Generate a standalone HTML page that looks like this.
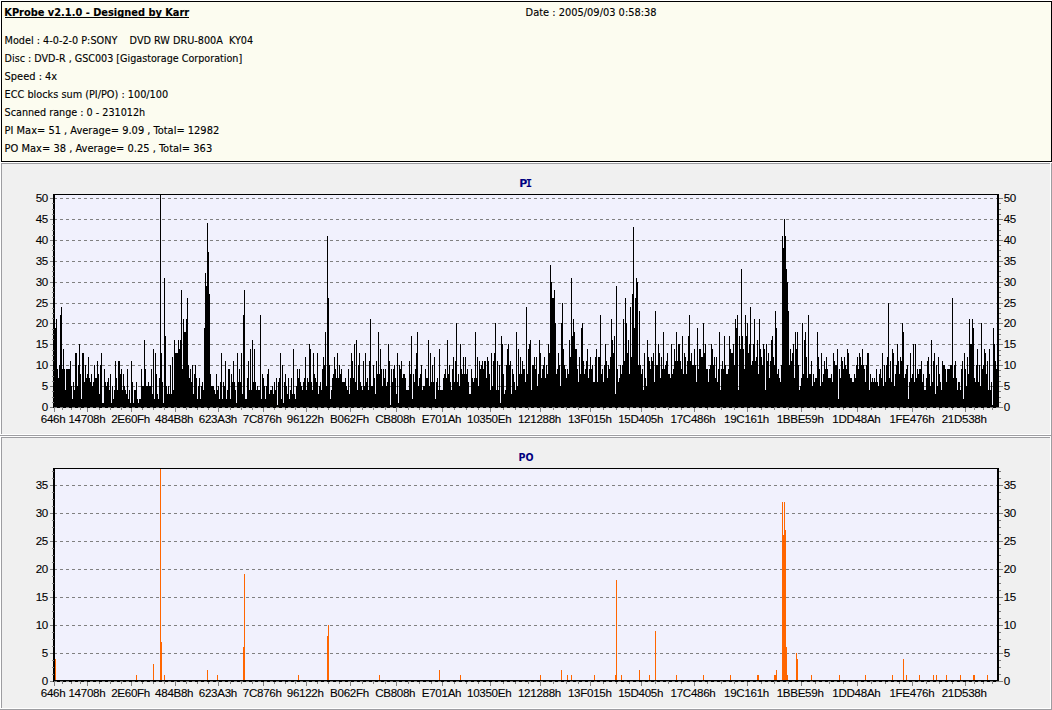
<!DOCTYPE html>
<html lang="en"><head><meta charset="utf-8"><title>KProbe v2.1.0 - PI/PO scan</title>
<style>html,body{margin:0;padding:0;background:#f0f0f0;}body{width:1052px;height:710px;overflow:hidden;}svg{display:block;}.t{font-family:"DejaVu Sans Condensed","Liberation Sans",sans-serif;font-size:11px;fill:#000;stroke:#000;stroke-width:0.12px;}.a{font-family:"Liberation Sans",sans-serif;font-size:11.6px;letter-spacing:-0.3px;fill:#000;stroke:#000;stroke-width:0.1px;}.h{font-family:"DejaVu Sans","Liberation Sans",sans-serif;font-size:11px;font-weight:bold;fill:#000080;}</style></head><body>
<svg width="1052" height="710" viewBox="0 0 1052 710">
<g shape-rendering="crispEdges">
<rect x="0" y="0" width="1052" height="710" fill="#f0f0f0"/>
<rect x="0" y="0" width="1052" height="163" fill="#fff"/>
<rect x="1" y="1" width="1051" height="161" fill="#fcfcf0"/>
<rect x="0" y="163" width="1" height="547" fill="#fff"/>
<path d="M1.5 1.5H1051.5V161.5H1.5Z" fill="none" stroke="#000" stroke-width="1"/>
<rect x="1" y="163" width="1049" height="1" fill="#9d9da1"/>
<rect x="1" y="163" width="1" height="271" fill="#9d9da1"/>
<rect x="1050" y="163" width="1" height="272" fill="#fff"/>
<rect x="1" y="434" width="1050" height="1" fill="#fff"/>
<rect x="1" y="437" width="1049" height="1" fill="#9d9da1"/>
<rect x="1" y="437" width="1" height="271" fill="#9d9da1"/>
<rect x="1050" y="437" width="1" height="272" fill="#fff"/>
<rect x="1" y="708" width="1050" height="1" fill="#fff"/>
<rect x="0" y="435" width="1052" height="1" fill="#9d9da1"/>
<rect x="0" y="436" width="1052" height="1" fill="#fff"/>
<rect x="1051" y="163" width="1" height="547" fill="#9d9da1"/>
<rect x="0" y="709" width="1052" height="1" fill="#9d9da1"/>
</g>
<g shape-rendering="crispEdges">
<rect x="54" y="194" width="944" height="213" fill="#f1f1fd"/>
<path d="M54 386.5H997" stroke="#808080" stroke-width="1" stroke-dasharray="3 3" fill="none"/>
<path d="M54 365.5H997" stroke="#808080" stroke-width="1" stroke-dasharray="3 3" fill="none"/>
<path d="M54 344.5H997" stroke="#808080" stroke-width="1" stroke-dasharray="3 3" fill="none"/>
<path d="M54 323.5H997" stroke="#808080" stroke-width="1" stroke-dasharray="3 3" fill="none"/>
<path d="M54 303.5H997" stroke="#808080" stroke-width="1" stroke-dasharray="3 3" fill="none"/>
<path d="M54 282.5H997" stroke="#808080" stroke-width="1" stroke-dasharray="3 3" fill="none"/>
<path d="M54 261.5H997" stroke="#808080" stroke-width="1" stroke-dasharray="3 3" fill="none"/>
<path d="M54 240.5H997" stroke="#808080" stroke-width="1" stroke-dasharray="3 3" fill="none"/>
<path d="M54 219.5H997" stroke="#808080" stroke-width="1" stroke-dasharray="3 3" fill="none"/>
<path d="M54 198.5H997" stroke="#808080" stroke-width="1" stroke-dasharray="3 3" fill="none"/>
<path d="M54.5 407V323M55.5 407V328M56.5 407V319M57.5 407V369M58.5 407V378M59.5 407V365M60.5 407V315M61.5 407V307M62.5 407V369M63.5 407V349M64.5 407V369M65.5 407V390M66.5 407V369M67.5 407V369M68.5 407V369M69.5 407V369M70.5 407V361M71.5 407V386M72.5 407V399M73.5 407V382M74.5 407V390M75.5 407V353M76.5 407V353M77.5 407V386M78.5 407V365M79.5 407V344M80.5 407V374M81.5 407V399M82.5 407V353M83.5 407V353M84.5 407V382M85.5 407V365M86.5 407V378M87.5 407V374M88.5 407V357M89.5 407V378M90.5 407V382M91.5 407V374M92.5 407V386M93.5 407V382M94.5 407V365M95.5 407V378M96.5 407V378M97.5 407V361M98.5 407V374M99.5 407V394M100.5 407V365M101.5 407V353M102.5 407V403M103.5 407V403M104.5 407V369M105.5 407V382M106.5 407V386M107.5 407V382M108.5 407V378M109.5 407V390M110.5 407V374M111.5 407V403M112.5 407V386M113.5 407V399M114.5 407V390M115.5 407V361M116.5 407V378M117.5 407V390M118.5 407V361M119.5 407V361M120.5 407V374M121.5 407V369M122.5 407V390M123.5 407V374M124.5 407V386M125.5 407V390M126.5 407V394M127.5 407V369M128.5 407V399M129.5 407V390M130.5 407V403M131.5 407V361M132.5 407V382M133.5 407V403M134.5 407V390M135.5 407V390M136.5 407V382M137.5 407V399M138.5 407V403M139.5 407V399M140.5 407V399M141.5 407V369M142.5 407V386M143.5 407V386M144.5 407V340M145.5 407V369M146.5 407V386M147.5 407V386M148.5 407V382M149.5 407V386M150.5 407V386M151.5 407V369M152.5 407V394M153.5 407V349M154.5 407V399M155.5 407V353M156.5 407V374M157.5 407V394M158.5 407V399M159.5 407V378M160.5 407V194M161.5 407V353M162.5 407V382M163.5 407V403M164.5 407V278M165.5 407V336M166.5 407V386M167.5 407V394M168.5 407V386M169.5 407V394M170.5 407V365M171.5 407V394M172.5 407V357M173.5 407V390M174.5 407V340M175.5 407V353M176.5 407V353M177.5 407V353M178.5 407V340M179.5 407V349M180.5 407V340M181.5 407V290M182.5 407V369M183.5 407V319M184.5 407V332M185.5 407V332M186.5 407V319M187.5 407V298M188.5 407V365M189.5 407V378M190.5 407V369M191.5 407V382M192.5 407V365M193.5 407V394M194.5 407V374M195.5 407V365M196.5 407V378M197.5 407V399M198.5 407V386M199.5 407V378M200.5 407V399M201.5 407V386M202.5 407V382M203.5 407V390M204.5 407V328M205.5 407V273M206.5 407V286M207.5 407V223M208.5 407V252M209.5 407V294M210.5 407V374M211.5 407V386M212.5 407V386M213.5 407V386M214.5 407V390M215.5 407V394M216.5 407V374M217.5 407V390M218.5 407V386M219.5 407V399M220.5 407V382M221.5 407V353M222.5 407V399M223.5 407V382M224.5 407V386M225.5 407V361M226.5 407V399M227.5 407V390M228.5 407V369M229.5 407V369M230.5 407V399M231.5 407V374M232.5 407V382M233.5 407V361M234.5 407V382M235.5 407V390M236.5 407V403M237.5 407V353M238.5 407V382M239.5 407V369M240.5 407V382M241.5 407V353M242.5 407V394M243.5 407V315M244.5 407V290M245.5 407V399M246.5 407V399M247.5 407V378M248.5 407V361M249.5 407V390M250.5 407V349M251.5 407V390M252.5 407V340M253.5 407V382M254.5 407V349M255.5 407V382M256.5 407V390M257.5 407V386M258.5 407V390M259.5 407V390M260.5 407V315M261.5 407V399M262.5 407V374M263.5 407V378M264.5 407V386M265.5 407V399M266.5 407V386M267.5 407V374M268.5 407V369M269.5 407V394M270.5 407V390M271.5 407V390M272.5 407V386M273.5 407V394M274.5 407V382M275.5 407V390M276.5 407V378M277.5 407V405M278.5 407V382M279.5 407V378M280.5 407V353M281.5 407V399M282.5 407V365M283.5 407V403M284.5 407V382M285.5 407V374M286.5 407V386M287.5 407V394M288.5 407V378M289.5 407V399M290.5 407V390M291.5 407V378M292.5 407V394M293.5 407V349M294.5 407V394M295.5 407V399M296.5 407V386M297.5 407V369M298.5 407V378M299.5 407V369M300.5 407V382M301.5 407V386M302.5 407V390M303.5 407V382M304.5 407V378M305.5 407V357M306.5 407V390M307.5 407V378M308.5 407V382M309.5 407V344M310.5 407V349M311.5 407V382M312.5 407V390M313.5 407V353M314.5 407V374M315.5 407V378M316.5 407V382M317.5 407V353M318.5 407V394M319.5 407V386M320.5 407V382M321.5 407V390M322.5 407V369M323.5 407V357M324.5 407V365M325.5 407V332M326.5 407V386M327.5 407V236M328.5 407V298M329.5 407V365M330.5 407V399M331.5 407V390M332.5 407V378M333.5 407V374M334.5 407V357M335.5 407V369M336.5 407V378M337.5 407V353M338.5 407V378M339.5 407V365M340.5 407V374M341.5 407V369M342.5 407V382M343.5 407V382M344.5 407V382M345.5 407V378M346.5 407V386M347.5 407V390M348.5 407V369M349.5 407V394M350.5 407V378M351.5 407V353M352.5 407V361M353.5 407V378M354.5 407V344M355.5 407V382M356.5 407V340M357.5 407V390M358.5 407V365M359.5 407V353M360.5 407V382M361.5 407V386M362.5 407V390M363.5 407V361M364.5 407V386M365.5 407V353M366.5 407V382M367.5 407V378M368.5 407V390M369.5 407V361M370.5 407V319M371.5 407V386M372.5 407V386M373.5 407V365M374.5 407V378M375.5 407V394M376.5 407V361M377.5 407V374M378.5 407V332M379.5 407V374M380.5 407V349M381.5 407V369M382.5 407V386M383.5 407V369M384.5 407V378M385.5 407V369M386.5 407V386M387.5 407V382M388.5 407V344M389.5 407V361M390.5 407V405M391.5 407V369M392.5 407V382M393.5 407V369M394.5 407V365M395.5 407V378M396.5 407V394M397.5 407V353M398.5 407V403M399.5 407V365M400.5 407V369M401.5 407V361M402.5 407V378M403.5 407V374M404.5 407V374M405.5 407V378M406.5 407V390M407.5 407V390M408.5 407V390M409.5 407V361M410.5 407V374M411.5 407V336M412.5 407V399M413.5 407V374M414.5 407V382M415.5 407V369M416.5 407V353M417.5 407V332M418.5 407V386M419.5 407V378M420.5 407V374M421.5 407V365M422.5 407V390M423.5 407V386M424.5 407V386M425.5 407V369M426.5 407V378M427.5 407V378M428.5 407V340M429.5 407V386M430.5 407V353M431.5 407V382M432.5 407V365M433.5 407V382M434.5 407V357M435.5 407V399M436.5 407V382M437.5 407V378M438.5 407V390M439.5 407V349M440.5 407V390M441.5 407V390M442.5 407V390M443.5 407V378M444.5 407V374M445.5 407V369M446.5 407V378M447.5 407V340M448.5 407V374M449.5 407V365M450.5 407V382M451.5 407V390M452.5 407V369M453.5 407V357M454.5 407V382M455.5 407V361M456.5 407V323M457.5 407V382M458.5 407V374M459.5 407V386M460.5 407V344M461.5 407V369M462.5 407V374M463.5 407V357M464.5 407V374M465.5 407V357M466.5 407V374M467.5 407V369M468.5 407V382M469.5 407V394M470.5 407V394M471.5 407V369M472.5 407V378M473.5 407V382M474.5 407V378M475.5 407V332M476.5 407V378M477.5 407V357M478.5 407V386M479.5 407V361M480.5 407V369M481.5 407V365M482.5 407V361M483.5 407V369M484.5 407V361M485.5 407V361M486.5 407V378M487.5 407V357M488.5 407V361M489.5 407V374M490.5 407V390M491.5 407V353M492.5 407V386M493.5 407V361M494.5 407V353M495.5 407V323M496.5 407V390M497.5 407V361M498.5 407V390M499.5 407V365M500.5 407V403M501.5 407V336M502.5 407V344M503.5 407V374M504.5 407V394M505.5 407V390M506.5 407V365M507.5 407V349M508.5 407V344M509.5 407V365M510.5 407V361M511.5 407V394M512.5 407V369M513.5 407V374M514.5 407V382M515.5 407V390M516.5 407V332M517.5 407V386M518.5 407V349M519.5 407V374M520.5 407V357M521.5 407V374M522.5 407V361M523.5 407V369M524.5 407V369M525.5 407V382M526.5 407V307M527.5 407V374M528.5 407V349M529.5 407V344M530.5 407V340M531.5 407V390M532.5 407V365M533.5 407V365M534.5 407V357M535.5 407V369M536.5 407V357M537.5 407V386M538.5 407V374M539.5 407V340M540.5 407V353M541.5 407V378M542.5 407V369M543.5 407V365M544.5 407V357M545.5 407V378M546.5 407V365M547.5 407V374M548.5 407V344M549.5 407V353M550.5 407V265M551.5 407V282M552.5 407V298M553.5 407V298M554.5 407V290M555.5 407V323M556.5 407V374M557.5 407V369M558.5 407V353M559.5 407V365M560.5 407V386M561.5 407V323M562.5 407V303M563.5 407V349M564.5 407V365M565.5 407V369M566.5 407V378M567.5 407V369M568.5 407V374M569.5 407V340M570.5 407V357M571.5 407V278M572.5 407V336M573.5 407V319M574.5 407V332M575.5 407V349M576.5 407V349M577.5 407V369M578.5 407V382M579.5 407V357M580.5 407V374M581.5 407V328M582.5 407V323M583.5 407V361M584.5 407V374M585.5 407V369M586.5 407V361M587.5 407V349M588.5 407V378M589.5 407V369M590.5 407V357M591.5 407V369M592.5 407V365M593.5 407V382M594.5 407V382M595.5 407V357M596.5 407V349M597.5 407V382M598.5 407V357M599.5 407V357M600.5 407V315M601.5 407V374M602.5 407V369M603.5 407V382M604.5 407V365M605.5 407V344M606.5 407V361M607.5 407V378M608.5 407V365M609.5 407V369M610.5 407V357M611.5 407V319M612.5 407V340M613.5 407V353M614.5 407V336M615.5 407V394M616.5 407V286M617.5 407V369M618.5 407V382M619.5 407V378M620.5 407V365M621.5 407V374M622.5 407V365M623.5 407V319M624.5 407V361M625.5 407V298M626.5 407V323M627.5 407V353M628.5 407V340M629.5 407V374M630.5 407V307M631.5 407V357M632.5 407V294M633.5 407V227M634.5 407V328M635.5 407V298M636.5 407V278M637.5 407V282M638.5 407V365M639.5 407V311M640.5 407V365M641.5 407V374M642.5 407V369M643.5 407V390M644.5 407V353M645.5 407V378M646.5 407V386M647.5 407V340M648.5 407V357M649.5 407V361M650.5 407V369M651.5 407V357M652.5 407V361M653.5 407V353M654.5 407V382M655.5 407V311M656.5 407V365M657.5 407V365M658.5 407V344M659.5 407V353M660.5 407V378M661.5 407V357M662.5 407V369M663.5 407V332M664.5 407V369M665.5 407V365M666.5 407V361M667.5 407V353M668.5 407V374M669.5 407V374M670.5 407V378M671.5 407V344M672.5 407V374M673.5 407V369M674.5 407V349M675.5 407V361M676.5 407V332M677.5 407V361M678.5 407V344M679.5 407V344M680.5 407V361M681.5 407V369M682.5 407V336M683.5 407V374M684.5 407V353M685.5 407V357M686.5 407V374M687.5 407V361M688.5 407V336M689.5 407V315M690.5 407V361M691.5 407V353M692.5 407V365M693.5 407V365M694.5 407V349M695.5 407V365M696.5 407V382M697.5 407V328M698.5 407V369M699.5 407V349M700.5 407V349M701.5 407V357M702.5 407V357M703.5 407V323M704.5 407V353M705.5 407V344M706.5 407V369M707.5 407V369M708.5 407V382M709.5 407V369M710.5 407V365M711.5 407V344M712.5 407V349M713.5 407V365M714.5 407V357M715.5 407V378M716.5 407V357M717.5 407V382M718.5 407V369M719.5 407V332M720.5 407V390M721.5 407V369M722.5 407V361M723.5 407V369M724.5 407V336M725.5 407V365M726.5 407V374M727.5 407V374M728.5 407V369M729.5 407V336M730.5 407V349M731.5 407V353M732.5 407V353M733.5 407V344M734.5 407V365M735.5 407V319M736.5 407V328M737.5 407V315M738.5 407V390M739.5 407V336M740.5 407V349M741.5 407V269M742.5 407V336M743.5 407V349M744.5 407V369M745.5 407V315M746.5 407V336M747.5 407V323M748.5 407V353M749.5 407V344M750.5 407V307M751.5 407V365M752.5 407V361M753.5 407V344M754.5 407V319M755.5 407V361M756.5 407V357M757.5 407V340M758.5 407V374M759.5 407V319M760.5 407V349M761.5 407V357M762.5 407V365M763.5 407V344M764.5 407V349M765.5 407V390M766.5 407V344M767.5 407V361M768.5 407V353M769.5 407V378M770.5 407V361M771.5 407V340M772.5 407V336M773.5 407V357M774.5 407V365M775.5 407V311M776.5 407V328M777.5 407V374M778.5 407V369M779.5 407V378M780.5 407V382M781.5 407V365M782.5 407V236M783.5 407V248M784.5 407V219M785.5 407V236M786.5 407V269M787.5 407V282M788.5 407V311M789.5 407V365M790.5 407V349M791.5 407V361M792.5 407V353M793.5 407V344M794.5 407V378M795.5 407V332M796.5 407V349M797.5 407V332M798.5 407V365M799.5 407V390M800.5 407V386M801.5 407V378M802.5 407V323M803.5 407V374M804.5 407V340M805.5 407V332M806.5 407V357M807.5 407V378M808.5 407V315M809.5 407V374M810.5 407V374M811.5 407V361M812.5 407V386M813.5 407V374M814.5 407V382M815.5 407V378M816.5 407V378M817.5 407V332M818.5 407V357M819.5 407V369M820.5 407V386M821.5 407V353M822.5 407V382M823.5 407V374M824.5 407V361M825.5 407V369M826.5 407V357M827.5 407V369M828.5 407V378M829.5 407V378M830.5 407V378M831.5 407V374M832.5 407V382M833.5 407V353M834.5 407V361M835.5 407V365M836.5 407V365M837.5 407V349M838.5 407V399M839.5 407V369M840.5 407V378M841.5 407V357M842.5 407V361M843.5 407V369M844.5 407V357M845.5 407V365M846.5 407V369M847.5 407V349M848.5 407V353M849.5 407V374M850.5 407V378M851.5 407V378M852.5 407V382M853.5 407V382M854.5 407V374M855.5 407V378M856.5 407V365M857.5 407V357M858.5 407V369M859.5 407V353M860.5 407V357M861.5 407V365M862.5 407V349M863.5 407V365M864.5 407V369M865.5 407V382M866.5 407V365M867.5 407V353M868.5 407V353M869.5 407V390M870.5 407V374M871.5 407V382M872.5 407V378M873.5 407V382M874.5 407V378M875.5 407V382M876.5 407V369M877.5 407V382M878.5 407V386M879.5 407V374M880.5 407V369M881.5 407V378M882.5 407V353M883.5 407V386M884.5 407V365M885.5 407V382M886.5 407V365M887.5 407V357M888.5 407V303M889.5 407V378M890.5 407V361M891.5 407V382M892.5 407V349M893.5 407V353M894.5 407V386M895.5 407V374M896.5 407V365M897.5 407V344M898.5 407V361M899.5 407V374M900.5 407V357M901.5 407V361M902.5 407V323M903.5 407V332M904.5 407V378M905.5 407V374M906.5 407V369M907.5 407V365M908.5 407V399M909.5 407V382M910.5 407V353M911.5 407V378M912.5 407V374M913.5 407V344M914.5 407V382M915.5 407V344M916.5 407V378M917.5 407V369M918.5 407V374M919.5 407V369M920.5 407V369M921.5 407V361M922.5 407V382M923.5 407V374M924.5 407V390M925.5 407V390M926.5 407V378M927.5 407V361M928.5 407V357M929.5 407V374M930.5 407V386M931.5 407V340M932.5 407V382M933.5 407V361M934.5 407V353M935.5 407V394M936.5 407V365M937.5 407V386M938.5 407V357M939.5 407V374M940.5 407V382M941.5 407V390M942.5 407V361M943.5 407V365M944.5 407V365M945.5 407V369M946.5 407V382M947.5 407V369M948.5 407V369M949.5 407V369M950.5 407V365M951.5 407V365M952.5 407V298M953.5 407V378M954.5 407V365M955.5 407V361M956.5 407V378M957.5 407V390M958.5 407V382M959.5 407V382M960.5 407V390M961.5 407V369M962.5 407V361M963.5 407V399M964.5 407V353M965.5 407V369M966.5 407V386M967.5 407V357M968.5 407V374M969.5 407V319M970.5 407V344M971.5 407V344M972.5 407V319M973.5 407V328M974.5 407V378M975.5 407V382M976.5 407V365M977.5 407V349M978.5 407V382M979.5 407V365M980.5 407V386M981.5 407V323M982.5 407V369M983.5 407V365M984.5 407V349M985.5 407V353M986.5 407V374M987.5 407V361M988.5 407V390M989.5 407V349M990.5 407V390M991.5 407V382M992.5 407V405M993.5 407V328M994.5 407V344M995.5 407V361M996.5 407V369" stroke="#000" stroke-width="1" fill="none"/>
<rect x="53" y="194" width="2" height="214" fill="#000"/>
<rect x="997" y="194" width="2" height="214" fill="#000"/>
<rect x="53" y="194" width="946" height="1" fill="#000"/>
<rect x="53" y="406" width="946" height="1" fill="#000"/>
<rect x="53" y="407" width="946" height="1" fill="#000"/>
<path d="M54 407.5H999" stroke="#808080" stroke-width="1" stroke-dasharray="3 3" fill="none"/>
<path d="M50 407.5H53M999 407.5H1003M52 402.5H54M999 402.5H1001M52 397.5H54M999 397.5H1001M52 391.5H54M999 391.5H1001M50 386.5H53M999 386.5H1003M52 381.5H54M999 381.5H1001M52 376.5H54M999 376.5H1001M52 370.5H54M999 370.5H1001M50 365.5H53M999 365.5H1003M52 360.5H54M999 360.5H1001M52 355.5H54M999 355.5H1001M52 350.5H54M999 350.5H1001M50 344.5H53M999 344.5H1003M52 339.5H54M999 339.5H1001M52 334.5H54M999 334.5H1001M52 329.5H54M999 329.5H1001M50 323.5H53M999 323.5H1003M52 318.5H54M999 318.5H1001M52 313.5H54M999 313.5H1001M52 308.5H54M999 308.5H1001M50 303.5H53M999 303.5H1003M52 297.5H54M999 297.5H1001M52 292.5H54M999 292.5H1001M52 287.5H54M999 287.5H1001M50 282.5H53M999 282.5H1003M52 276.5H54M999 276.5H1001M52 271.5H54M999 271.5H1001M52 266.5H54M999 266.5H1001M50 261.5H53M999 261.5H1003M52 256.5H54M999 256.5H1001M52 250.5H54M999 250.5H1001M52 245.5H54M999 245.5H1001M50 240.5H53M999 240.5H1003M52 235.5H54M999 235.5H1001M52 230.5H54M999 230.5H1001M52 224.5H54M999 224.5H1001M50 219.5H53M999 219.5H1003M52 214.5H54M999 214.5H1001M52 209.5H54M999 209.5H1001M52 203.5H54M999 203.5H1001M50 198.5H53M999 198.5H1003M54.5 408V412M62.5 408V410M71.5 408V410M80.5 408V410M87.5 408V412M99.5 408V410M110.5 408V410M121.5 408V410M131.5 408V412M142.5 408V410M153.5 408V410M164.5 408V410M175.5 408V412M186.5 408V410M197.5 408V410M208.5 408V410M218.5 408V412M230.5 408V410M241.5 408V410M252.5 408V410M263.5 408V412M274.5 408V410M285.5 408V410M295.5 408V410M306.5 408V412M317.5 408V410M328.5 408V410M339.5 408V410M350.5 408V412M362.5 408V410M373.5 408V410M385.5 408V410M396.5 408V412M408.5 408V410M419.5 408V410M431.5 408V410M442.5 408V412M454.5 408V410M466.5 408V410M478.5 408V410M490.5 408V412M503.5 408V410M515.5 408V410M528.5 408V410M540.5 408V412M553.5 408V410M566.5 408V410M578.5 408V410M590.5 408V412M603.5 408V410M616.5 408V410M629.5 408V410M641.5 408V412M655.5 408V410M668.5 408V410M681.5 408V410M694.5 408V412M707.5 408V410M721.5 408V410M734.5 408V410M747.5 408V412M761.5 408V410M774.5 408V410M788.5 408V410M801.5 408V412M815.5 408V410M829.5 408V410M843.5 408V410M857.5 408V412M871.5 408V410M885.5 408V410M899.5 408V410M912.5 408V412M926.5 408V410M939.5 408V410M952.5 408V410M965.5 408V412M974.5 408V410M983.5 408V410M992.5 408V410" stroke="#808080" stroke-width="1" fill="none"/>
</g>
<text class="a" x="48" y="410.7" text-anchor="end">0</text>
<text class="a" x="1003.7" y="410.7">0</text>
<text class="a" x="48" y="389.7" text-anchor="end">5</text>
<text class="a" x="1003.7" y="389.7">5</text>
<text class="a" x="48" y="368.7" text-anchor="end">10</text>
<text class="a" x="1003.7" y="368.7">10</text>
<text class="a" x="48" y="347.7" text-anchor="end">15</text>
<text class="a" x="1003.7" y="347.7">15</text>
<text class="a" x="48" y="326.7" text-anchor="end">20</text>
<text class="a" x="1003.7" y="326.7">20</text>
<text class="a" x="48" y="306.7" text-anchor="end">25</text>
<text class="a" x="1003.7" y="306.7">25</text>
<text class="a" x="48" y="285.7" text-anchor="end">30</text>
<text class="a" x="1003.7" y="285.7">30</text>
<text class="a" x="48" y="264.7" text-anchor="end">35</text>
<text class="a" x="1003.7" y="264.7">35</text>
<text class="a" x="48" y="243.7" text-anchor="end">40</text>
<text class="a" x="1003.7" y="243.7">40</text>
<text class="a" x="48" y="222.7" text-anchor="end">45</text>
<text class="a" x="1003.7" y="222.7">45</text>
<text class="a" x="48" y="201.7" text-anchor="end">50</text>
<text class="a" x="1003.7" y="201.7">50</text>
<text class="a" x="53.1" y="422.5" text-anchor="middle">646h</text>
<text class="a" x="86.9" y="422.5" text-anchor="middle">14708h</text>
<text class="a" x="130.6" y="422.5" text-anchor="middle">2E60Fh</text>
<text class="a" x="174.2" y="422.5" text-anchor="middle">484B8h</text>
<text class="a" x="217.9" y="422.5" text-anchor="middle">623A3h</text>
<text class="a" x="262.2" y="422.5" text-anchor="middle">7C876h</text>
<text class="a" x="305.2" y="422.5" text-anchor="middle">96122h</text>
<text class="a" x="349.5" y="422.5" text-anchor="middle">B062Fh</text>
<text class="a" x="395.2" y="422.5" text-anchor="middle">CB808h</text>
<text class="a" x="441.5" y="422.5" text-anchor="middle">E701Ah</text>
<text class="a" x="489.2" y="422.5" text-anchor="middle">10350Eh</text>
<text class="a" x="539.5" y="422.5" text-anchor="middle">121288h</text>
<text class="a" x="589.8" y="422.5" text-anchor="middle">13F015h</text>
<text class="a" x="640.7" y="422.5" text-anchor="middle">15D405h</text>
<text class="a" x="693.0" y="422.5" text-anchor="middle">17C486h</text>
<text class="a" x="746.5" y="422.5" text-anchor="middle">19C161h</text>
<text class="a" x="800.1" y="422.5" text-anchor="middle">1BBE59h</text>
<text class="a" x="856.4" y="422.5" text-anchor="middle">1DD48Ah</text>
<text class="a" x="911.9" y="422.5" text-anchor="middle">1FE476h</text>
<text class="a" x="964.2" y="422.5" text-anchor="middle">21D538h</text>
<text class="h" x="519.3" y="187">P<tspan font-family="DejaVu Sans Mono" dx="-1.7" font-size="10.5px">I</tspan></text>
<g shape-rendering="crispEdges">
<rect x="54" y="468" width="944" height="213" fill="#f1f1fd"/>
<path d="M54 653.5H997" stroke="#808080" stroke-width="1" stroke-dasharray="3 3" fill="none"/>
<path d="M54 625.5H997" stroke="#808080" stroke-width="1" stroke-dasharray="3 3" fill="none"/>
<path d="M54 597.5H997" stroke="#808080" stroke-width="1" stroke-dasharray="3 3" fill="none"/>
<path d="M54 569.5H997" stroke="#808080" stroke-width="1" stroke-dasharray="3 3" fill="none"/>
<path d="M54 541.5H997" stroke="#808080" stroke-width="1" stroke-dasharray="3 3" fill="none"/>
<path d="M54 513.5H997" stroke="#808080" stroke-width="1" stroke-dasharray="3 3" fill="none"/>
<path d="M54 485.5H997" stroke="#808080" stroke-width="1" stroke-dasharray="3 3" fill="none"/>
<path d="M55.5 681V659M136.5 681V675M153.5 681V664M160.5 681V468M161.5 681V642M164.5 681V675M207.5 681V670M217.5 681V675M243.5 681V647M244.5 681V574M298.5 681V675M327.5 681V636M328.5 681V625M379.5 681V675M439.5 681V670M460.5 681V675M540.5 681V675M561.5 681V670M567.5 681V675M571.5 681V675M594.5 681V675M615.5 681V675M616.5 681V580M621.5 681V675M639.5 681V670M649.5 681V675M655.5 681V631M676.5 681V675M703.5 681V675M730.5 681V675M757.5 681V675M758.5 681V675M774.5 681V675M775.5 681V675M776.5 681V670M782.5 681V502M783.5 681V535M784.5 681V502M785.5 681V530M786.5 681V647M787.5 681V675M796.5 681V653M797.5 681V659M811.5 681V675M839.5 681V675M865.5 681V675M892.5 681V675M903.5 681V659M906.5 681V675M919.5 681V675M933.5 681V675M936.5 681V675M946.5 681V675M960.5 681V675M973.5 681V675M974.5 681V675M987.5 681V675" stroke="#ff6600" stroke-width="1" fill="none"/>
<rect x="53" y="468" width="2" height="214" fill="#000"/>
<rect x="997" y="468" width="2" height="214" fill="#000"/>
<rect x="53" y="468" width="946" height="1" fill="#000"/>
<rect x="53" y="680" width="946" height="1" fill="#000"/>
<rect x="53" y="681" width="946" height="1" fill="#000"/>
<path d="M54 681.5H999" stroke="#808080" stroke-width="1" stroke-dasharray="3 3" fill="none"/>
<path d="M50 681.5H53M999 681.5H1003M52 674.5H54M999 674.5H1001M52 667.5H54M999 667.5H1001M52 660.5H54M999 660.5H1001M50 653.5H53M999 653.5H1003M52 646.5H54M999 646.5H1001M52 639.5H54M999 639.5H1001M52 632.5H54M999 632.5H1001M50 625.5H53M999 625.5H1003M52 618.5H54M999 618.5H1001M52 611.5H54M999 611.5H1001M52 604.5H54M999 604.5H1001M50 597.5H53M999 597.5H1003M52 590.5H54M999 590.5H1001M52 583.5H54M999 583.5H1001M52 576.5H54M999 576.5H1001M50 569.5H53M999 569.5H1003M52 562.5H54M999 562.5H1001M52 555.5H54M999 555.5H1001M52 548.5H54M999 548.5H1001M50 541.5H53M999 541.5H1003M52 534.5H54M999 534.5H1001M52 527.5H54M999 527.5H1001M52 520.5H54M999 520.5H1001M50 513.5H53M999 513.5H1003M52 506.5H54M999 506.5H1001M52 499.5H54M999 499.5H1001M52 492.5H54M999 492.5H1001M50 485.5H53M999 485.5H1003M52 478.5H54M999 478.5H1001M52 471.5H54M999 471.5H1001M54.5 682V686M62.5 682V684M71.5 682V684M80.5 682V684M87.5 682V686M99.5 682V684M110.5 682V684M121.5 682V684M131.5 682V686M142.5 682V684M153.5 682V684M164.5 682V684M175.5 682V686M186.5 682V684M197.5 682V684M208.5 682V684M218.5 682V686M230.5 682V684M241.5 682V684M252.5 682V684M263.5 682V686M274.5 682V684M285.5 682V684M295.5 682V684M306.5 682V686M317.5 682V684M328.5 682V684M339.5 682V684M350.5 682V686M362.5 682V684M373.5 682V684M385.5 682V684M396.5 682V686M408.5 682V684M419.5 682V684M431.5 682V684M442.5 682V686M454.5 682V684M466.5 682V684M478.5 682V684M490.5 682V686M503.5 682V684M515.5 682V684M528.5 682V684M540.5 682V686M553.5 682V684M566.5 682V684M578.5 682V684M590.5 682V686M603.5 682V684M616.5 682V684M629.5 682V684M641.5 682V686M655.5 682V684M668.5 682V684M681.5 682V684M694.5 682V686M707.5 682V684M721.5 682V684M734.5 682V684M747.5 682V686M761.5 682V684M774.5 682V684M788.5 682V684M801.5 682V686M815.5 682V684M829.5 682V684M843.5 682V684M857.5 682V686M871.5 682V684M885.5 682V684M899.5 682V684M912.5 682V686M926.5 682V684M939.5 682V684M952.5 682V684M965.5 682V686M974.5 682V684M983.5 682V684M992.5 682V684" stroke="#808080" stroke-width="1" fill="none"/>
</g>
<text class="a" x="48" y="684.7" text-anchor="end">0</text>
<text class="a" x="1003.7" y="684.7">0</text>
<text class="a" x="48" y="656.7" text-anchor="end">5</text>
<text class="a" x="1003.7" y="656.7">5</text>
<text class="a" x="48" y="628.7" text-anchor="end">10</text>
<text class="a" x="1003.7" y="628.7">10</text>
<text class="a" x="48" y="600.7" text-anchor="end">15</text>
<text class="a" x="1003.7" y="600.7">15</text>
<text class="a" x="48" y="572.7" text-anchor="end">20</text>
<text class="a" x="1003.7" y="572.7">20</text>
<text class="a" x="48" y="544.7" text-anchor="end">25</text>
<text class="a" x="1003.7" y="544.7">25</text>
<text class="a" x="48" y="516.7" text-anchor="end">30</text>
<text class="a" x="1003.7" y="516.7">30</text>
<text class="a" x="48" y="488.7" text-anchor="end">35</text>
<text class="a" x="1003.7" y="488.7">35</text>
<text class="a" x="53.1" y="696.5" text-anchor="middle">646h</text>
<text class="a" x="86.9" y="696.5" text-anchor="middle">14708h</text>
<text class="a" x="130.6" y="696.5" text-anchor="middle">2E60Fh</text>
<text class="a" x="174.2" y="696.5" text-anchor="middle">484B8h</text>
<text class="a" x="217.9" y="696.5" text-anchor="middle">623A3h</text>
<text class="a" x="262.2" y="696.5" text-anchor="middle">7C876h</text>
<text class="a" x="305.2" y="696.5" text-anchor="middle">96122h</text>
<text class="a" x="349.5" y="696.5" text-anchor="middle">B062Fh</text>
<text class="a" x="395.2" y="696.5" text-anchor="middle">CB808h</text>
<text class="a" x="441.5" y="696.5" text-anchor="middle">E701Ah</text>
<text class="a" x="489.2" y="696.5" text-anchor="middle">10350Eh</text>
<text class="a" x="539.5" y="696.5" text-anchor="middle">121288h</text>
<text class="a" x="589.8" y="696.5" text-anchor="middle">13F015h</text>
<text class="a" x="640.7" y="696.5" text-anchor="middle">15D405h</text>
<text class="a" x="693.0" y="696.5" text-anchor="middle">17C486h</text>
<text class="a" x="746.5" y="696.5" text-anchor="middle">19C161h</text>
<text class="a" x="800.1" y="696.5" text-anchor="middle">1BBE59h</text>
<text class="a" x="856.4" y="696.5" text-anchor="middle">1DD48Ah</text>
<text class="a" x="911.9" y="696.5" text-anchor="middle">1FE476h</text>
<text class="a" x="964.2" y="696.5" text-anchor="middle">21D538h</text>
<text class="h" x="518.5" y="461" textLength="15" lengthAdjust="spacingAndGlyphs">PO</text>
<text class="t" x="4.3" y="16" font-weight="bold" stroke="none" textLength="184.9" lengthAdjust="spacingAndGlyphs">KProbe v2.1.0 - Designed by Karr</text>
<rect x="5" y="17" width="184" height="1" fill="#000" shape-rendering="crispEdges"/>
<text class="t" x="4.6" y="44" xml:space="preserve" textLength="248.6" lengthAdjust="spacingAndGlyphs">Model : 4-0-2-0 P:SONY    DVD RW DRU-800A  KY04</text>
<text class="t" x="4.6" y="62" xml:space="preserve" textLength="237.6" lengthAdjust="spacingAndGlyphs">Disc : DVD-R , GSC003 [Gigastorage Corporation]</text>
<text class="t" x="4.6" y="80" xml:space="preserve" textLength="52.6" lengthAdjust="spacingAndGlyphs">Speed : 4x</text>
<text class="t" x="4.6" y="98" xml:space="preserve" textLength="163.6" lengthAdjust="spacingAndGlyphs">ECC blocks sum (PI/PO) : 100/100</text>
<text class="t" x="4.6" y="116" xml:space="preserve" textLength="140.6" lengthAdjust="spacingAndGlyphs">Scanned range : 0 - 231012h</text>
<text class="t" x="4.6" y="134" xml:space="preserve" textLength="214.6" lengthAdjust="spacingAndGlyphs">PI Max= 51 , Average= 9.09 , Total= 12982</text>
<text class="t" x="4.6" y="152" xml:space="preserve" textLength="207.6" lengthAdjust="spacingAndGlyphs">PO Max= 38 , Average= 0.25 , Total= 363</text>
<text class="t" x="525.6" y="16" textLength="131" lengthAdjust="spacingAndGlyphs">Date : 2005/09/03 0:58:38</text>
</svg></body></html>
